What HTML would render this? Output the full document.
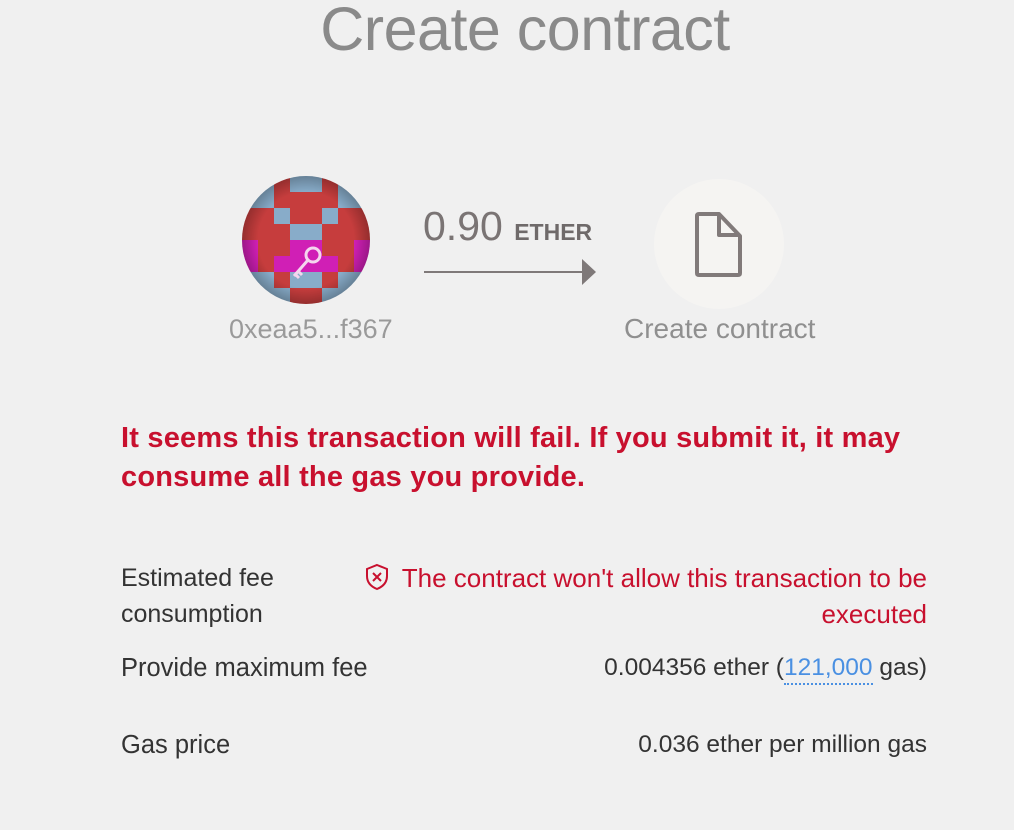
<!DOCTYPE html>
<html><head><meta charset="utf-8"><style>
html,body{margin:0;padding:0;background:#f0f0f0;width:1014px;height:830px;overflow:hidden;font-family:"Liberation Sans",sans-serif;}
.a{position:absolute;white-space:nowrap;}
</style></head><body>
<div class="a" style="left:0;width:1050px;text-align:center;top:-6px;font-size:61px;color:#8a8a8a;font-weight:300;letter-spacing:-0.5px">Create contract</div>

<svg class="a" style="left:242px;top:176px" width="128" height="128" viewBox="0 0 128 128">
<defs><clipPath id="c"><circle cx="64" cy="64" r="64"/></clipPath>
<radialGradient id="g" cx="50%" cy="50%" r="50%"><stop offset="0.75" stop-color="#000" stop-opacity="0"/><stop offset="1" stop-color="#000" stop-opacity="0.25"/></radialGradient></defs>
<g clip-path="url(#c)" id="grid"></g>
<circle cx="64" cy="64" r="64" fill="url(#g)"/>
<g stroke="#f4d6ee" stroke-width="3" fill="none"><circle cx="71" cy="79" r="7"/><path d="M66 84 L52 100 M56 95 L60 99 M53 98 L57 102"/></g>
</svg>
<script>
var rows=["BBRBBRBB","BBRRRRBB","RRBRRBRR","RRRBBRRR","MRRMMRRM","MRMMMMRM","BBRBBRBB","MBBRRBBM"];
var col={B:"#88acc9",R:"#c63d3d",M:"#d01fb5"};var s="";
rows.forEach(function(r,y){for(var x=0;x<8;x++)s+='<rect x="'+x*16+'" y="'+y*16+'" width="16.5" height="16.5" fill="'+col[r[x]]+'"/>';});
document.getElementById("grid").innerHTML=s;
</script>
<div class="a" style="left:229px;top:314px;font-size:27px;color:#9a9a9a;font-weight:300">0xeaa5...f367</div>

<div class="a" style="left:423px;top:203px;font-size:41px;color:#7a7474">0.90 <span style="font-size:23px;font-weight:bold;color:#6f6a6a">ETHER</span></div>
<div class="a" style="left:424px;top:271px;width:160px;height:2px;background:#7f7979"></div>
<svg class="a" style="left:582px;top:259px" width="15" height="27"><path d="M0 0 L14 13 L0 26Z" fill="#7f7979"/></svg>

<div class="a" style="left:654px;top:179px;width:130px;height:130px;border-radius:50%;background:#f5f4f2"></div>
<svg class="a" style="left:694px;top:211px" width="50" height="68"><path d="M5 3 H25 L46 25 V62 Q46 64 44 64 H5 Q3 64 3 62 V5 Q3 3 5 3Z M25 3 V24 H46" fill="none" stroke="#817a7a" stroke-width="4" stroke-linejoin="round"/></svg>
<div class="a" style="left:624px;top:313px;font-size:28px;color:#8f8f8f;font-weight:300">Create contract</div>

<div class="a" style="left:121px;top:419px;font-size:29px;font-weight:bold;color:#c8102e;line-height:39px;letter-spacing:0.2px">It seems this transaction will fail. If you submit it, it may<br>consume all the gas you provide.</div>

<div class="a" style="left:121px;top:560px;font-size:25px;color:#333;line-height:36px">Estimated fee<br>consumption</div>
<svg class="a" style="left:364px;top:563px" width="26" height="28"><path d="M13 2 L23 6 V13 Q23 22 13 26 Q3 22 3 13 V6Z" fill="none" stroke="#c8102e" stroke-width="2"/><path d="M9 10 L17 18 M17 10 L9 18" stroke="#c8102e" stroke-width="2"/></svg>
<div class="a" style="right:87px;top:560px;font-size:26px;color:#c8102e;line-height:36px;text-align:right">The contract won't allow this transaction to be<br>executed</div>

<div class="a" style="left:121px;top:654px;font-size:25.5px;color:#333">Provide maximum fee</div>
<div class="a" style="right:87px;top:654px;font-size:24.5px;color:#333">0.004356 ether (<span style="color:#4a90e2;border-bottom:2px dotted #4a90e2;padding-bottom:2px">121,000</span> gas)</div>

<div class="a" style="left:121px;top:731px;font-size:25.5px;color:#333">Gas price</div>
<div class="a" style="right:87px;top:731px;font-size:24.5px;color:#333">0.036 ether per million gas</div>
</body></html>
